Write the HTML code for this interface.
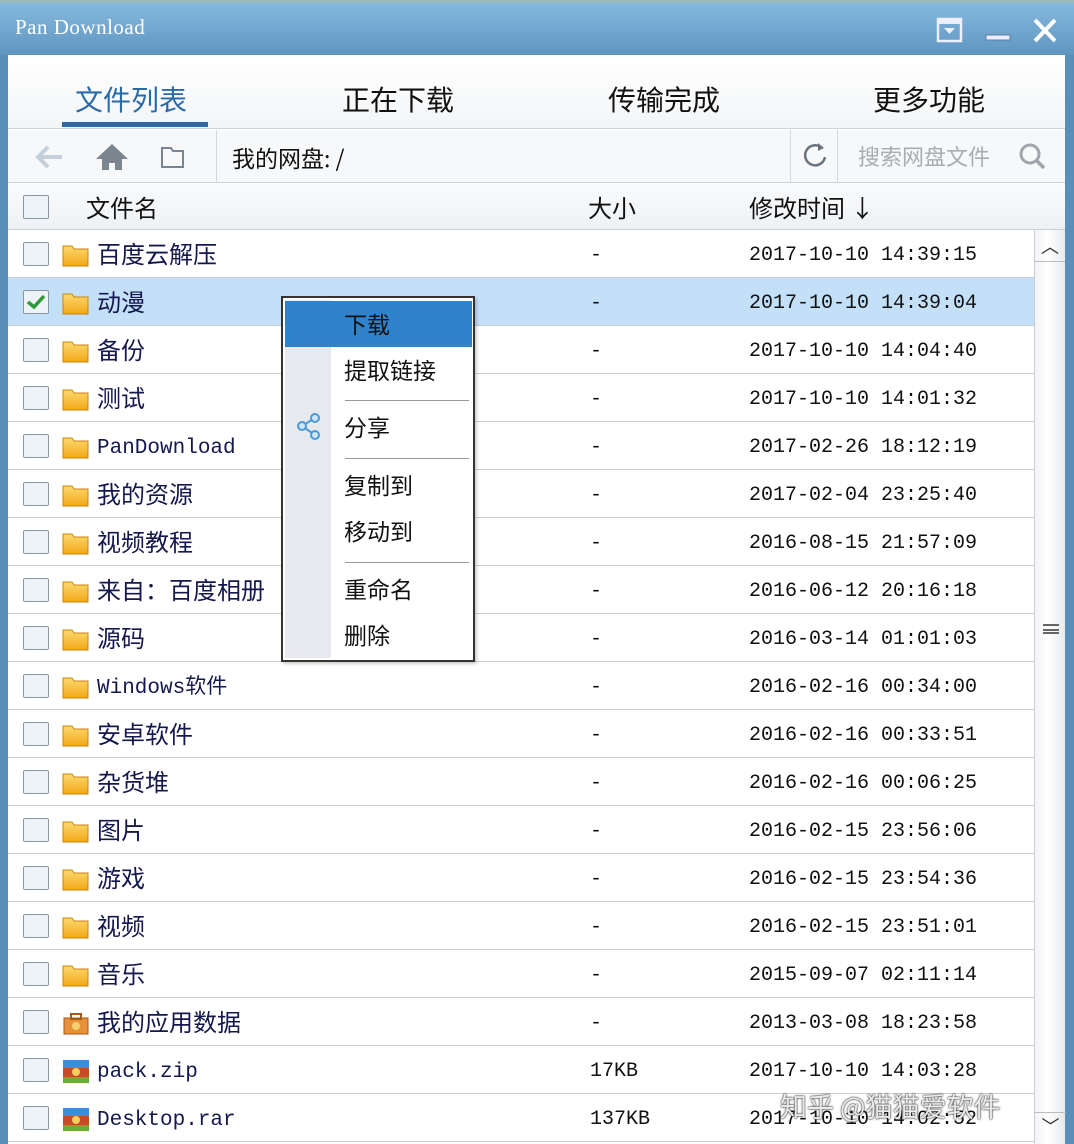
<!DOCTYPE html>
<html><head><meta charset="utf-8">
<style>
*{margin:0;padding:0;box-sizing:border-box}
body{width:1074px;height:1144px;overflow:hidden;background:#5a8fba;font-family:"Liberation Sans","Noto Sans CJK SC",sans-serif;position:relative}
.title{position:absolute;left:0;top:0;width:1074px;height:55px;background:linear-gradient(#86b9df,#5f95c0);border-top:3px solid #9bb;}
.title .t{position:absolute;left:15px;top:12px;font-family:"Liberation Serif",serif;font-size:21px;color:#fff;letter-spacing:0.5px}
.main{position:absolute;left:8px;top:55px;width:1057px;height:1089px;background:#fff}
.tabs{position:absolute;left:0;top:0;width:1057px;height:74px;background:linear-gradient(#fff,#f3f5f7);border-bottom:1px solid #cdd3d8}
.tab{position:absolute;top:24px;font-size:28px;color:#111;font-family:"Noto Sans CJK SC",sans-serif;line-height:40px}
.tool{position:absolute;left:0;top:75px;width:1057px;height:53px;background:#f7f8f9;border-bottom:1px solid #cdd3d8}
.hdr{position:absolute;left:0;top:128px;width:1057px;height:47px;background:linear-gradient(#fafbfc,#eef1f4);border-bottom:1px solid #c8ced4}
.cb{position:absolute;width:26px;height:24px;border:1.5px solid #8a96a0;background:#eef3f8;border-radius:2px}
.row{position:absolute;left:0;width:1026px;height:48px;border-bottom:1px solid #c9ccd0}
.row .cb{left:15px;top:12px}
.fold{position:absolute;left:54px;top:13px;width:27px;height:24px}
.nm{position:absolute;left:89px;top:6px;font-size:24px;color:#14184e;font-family:"Noto Sans CJK SC",sans-serif;line-height:34px}
.nm.m{font-family:"Liberation Mono","Noto Sans CJK SC",monospace;font-size:21px;top:10px}
.sz{position:absolute;left:582px;top:12px;font-family:"Liberation Mono",monospace;font-size:20px;color:#111;line-height:28px}
.dt{position:absolute;left:741px;top:12px;font-family:"Liberation Mono",monospace;font-size:20px;color:#111;line-height:28px}
.menu{position:absolute;left:281px;top:296px;width:194px;height:366px;border:2px solid #333;background:#fff;box-shadow:2px 2px 3px rgba(0,0,0,.2)}
.menu .strip{position:absolute;left:2px;top:2px;width:46px;height:358px;background:#e6e9ed}
.menu .hl{position:absolute;left:2px;top:3px;width:187px;height:46px;background:#2f82cc}
.mi{position:absolute;left:61px;font-size:23px;color:#111;font-family:"Noto Sans CJK SC",sans-serif;line-height:30px}
.sep{position:absolute;left:62px;width:124px;height:1px;background:#999}
</style></head><body>
<div class="title"><span class="t">Pan Download</span>
<svg style="position:absolute;left:935px;top:14px" width="130" height="30" viewBox="0 0 130 30">
<rect x="3" y="2" width="23" height="22" fill="none" stroke="#eef" stroke-width="2.5"/><rect x="3" y="2" width="23" height="5" fill="#eef"/><path d="M9 11h11l-5.5 6z" fill="#eef"/>
<rect x="51" y="18" width="24" height="5" fill="#eef" stroke="#5a7f9f" stroke-width="1"/>
<path d="M100 3l20 21M120 3l-20 21" stroke="#fff" stroke-width="4"/>
</svg></div>
<div class="main">
<div class="tabs">
<div class="tab" style="left:67px;color:#2b6aa8">文件列表</div>
<div style="position:absolute;left:54px;top:67px;width:146px;height:5px;background:#2f6aa6"></div>
<div class="tab" style="left:334px">正在下载</div>
<div class="tab" style="left:600px">传输完成</div>
<div class="tab" style="left:865px">更多功能</div>
</div>
<div class="tool">
<svg style="position:absolute;left:26px;top:12px" width="190" height="30">
<path d="M4 15h24M14 5l-10 10 10 10" stroke="#c4cfda" stroke-width="4" fill="none"/>
<path d="M78 2l-16 15h6v11h7v-7h6v7h7v-11h6z" fill="#7a8590"/>
<path d="M128 6h9l2 3h10v16h-21z" fill="none" stroke="#7a8590" stroke-width="2"/>
</svg>
<div style="position:absolute;left:208px;top:0;width:1px;height:53px;background:#d5d9dd"></div>
<div style="position:absolute;left:224px;top:10px;font-size:23px;color:#111;font-family:'Noto Sans CJK SC',sans-serif">我的网盘: /</div>
<div style="position:absolute;left:782px;top:0;width:1px;height:53px;background:#d5d9dd"></div>
<div style="position:absolute;left:829px;top:0;width:1px;height:53px;background:#d5d9dd"></div>
<svg style="position:absolute;left:792px;top:10px" width="30" height="32"><path d="M22 8a10 10 0 1 0 3 9" stroke="#6a747e" stroke-width="2.5" fill="none"/><path d="M18 3l6 5-6 3z" fill="#6a747e"/></svg>
<div style="position:absolute;left:850px;top:10px;font-size:22px;color:#a8adb2;font-family:'Noto Sans CJK SC',sans-serif">搜索网盘文件</div>
<svg style="position:absolute;left:1010px;top:12px" width="30" height="30"><circle cx="12" cy="12" r="9" stroke="#a0a6ac" stroke-width="3" fill="none"/><path d="M19 19l7 7" stroke="#a0a6ac" stroke-width="3.5"/></svg>
</div>
<div class="hdr">
<div class="cb" style="left:15px;top:12px"></div>
<div style="position:absolute;left:78px;top:6px;font-size:24px;color:#111;font-family:'Noto Sans CJK SC',sans-serif">文件名</div>
<div style="position:absolute;left:580px;top:6px;font-size:24px;color:#111;font-family:'Noto Sans CJK SC',sans-serif">大小</div>
<div style="position:absolute;left:741px;top:6px;font-size:24px;color:#111;font-family:'Noto Sans CJK SC',sans-serif">修改时间 ↓</div>
</div>
<div style="position:absolute;left:1026px;top:175px;width:31px;height:914px;background:linear-gradient(90deg,#f2f3f5,#fff 40%,#e8eaec);border-left:1px solid #c9cdd1">
<div style="height:32px;border-bottom:1px solid #bbb;text-align:center;font-size:18px;color:#333;line-height:34px">︿</div>
<div style="position:absolute;left:8px;top:394px;width:16px;height:10px;border-top:2px solid #666;border-bottom:2px solid #666"></div>
<div style="position:absolute;left:8px;top:399px;width:16px;height:2px;background:#666"></div>
<div style="position:absolute;left:0;bottom:0;width:31px;height:32px;border-top:1px solid #bbb;text-align:center;font-size:18px;color:#333;line-height:28px">﹀</div>
</div>
</div>
<svg width="0" height="0" style="position:absolute"><defs>
<linearGradient id="fg" x1="0" y1="0" x2="0" y2="1"><stop offset="0" stop-color="#ffd870"/><stop offset="1" stop-color="#f0a818"/></linearGradient>
</defs></svg>

<div style="position:absolute;left:8px;top:230px">
<div class="row" style="top:0"><div class="cb"></div><svg class="fold"><path d="M1 3h9l2 3h14v17H1z" fill="url(#fg)" stroke="#c8860a"/></svg><div class="nm">百度云解压</div><div class="sz">-</div><div class="dt">2017-10-10 14:39:15</div></div>
<div class="row" style="top:48px;background:#c4e0f9"><div class="cb"><svg width="24" height="22"><path d="M4 11l6 5 10-11" stroke="#2d9a3a" stroke-width="3.5" fill="none"/></svg></div><svg class="fold"><path d="M1 3h9l2 3h14v17H1z" fill="url(#fg)" stroke="#c8860a"/></svg><div class="nm">动漫</div><div class="sz">-</div><div class="dt">2017-10-10 14:39:04</div></div>
<div class="row" style="top:96px"><div class="cb"></div><svg class="fold"><path d="M1 3h9l2 3h14v17H1z" fill="url(#fg)" stroke="#c8860a"/></svg><div class="nm">备份</div><div class="sz">-</div><div class="dt">2017-10-10 14:04:40</div></div>
<div class="row" style="top:144px"><div class="cb"></div><svg class="fold"><path d="M1 3h9l2 3h14v17H1z" fill="url(#fg)" stroke="#c8860a"/></svg><div class="nm">测试</div><div class="sz">-</div><div class="dt">2017-10-10 14:01:32</div></div>
<div class="row" style="top:192px"><div class="cb"></div><svg class="fold"><path d="M1 3h9l2 3h14v17H1z" fill="url(#fg)" stroke="#c8860a"/></svg><div class="nm m">PanDownload</div><div class="sz">-</div><div class="dt">2017-02-26 18:12:19</div></div>
<div class="row" style="top:240px"><div class="cb"></div><svg class="fold"><path d="M1 3h9l2 3h14v17H1z" fill="url(#fg)" stroke="#c8860a"/></svg><div class="nm">我的资源</div><div class="sz">-</div><div class="dt">2017-02-04 23:25:40</div></div>
<div class="row" style="top:288px"><div class="cb"></div><svg class="fold"><path d="M1 3h9l2 3h14v17H1z" fill="url(#fg)" stroke="#c8860a"/></svg><div class="nm">视频教程</div><div class="sz">-</div><div class="dt">2016-08-15 21:57:09</div></div>
<div class="row" style="top:336px"><div class="cb"></div><svg class="fold"><path d="M1 3h9l2 3h14v17H1z" fill="url(#fg)" stroke="#c8860a"/></svg><div class="nm">来自：百度相册</div><div class="sz">-</div><div class="dt">2016-06-12 20:16:18</div></div>
<div class="row" style="top:384px"><div class="cb"></div><svg class="fold"><path d="M1 3h9l2 3h14v17H1z" fill="url(#fg)" stroke="#c8860a"/></svg><div class="nm">源码</div><div class="sz">-</div><div class="dt">2016-03-14 01:01:03</div></div>
<div class="row" style="top:432px"><div class="cb"></div><svg class="fold"><path d="M1 3h9l2 3h14v17H1z" fill="url(#fg)" stroke="#c8860a"/></svg><div class="nm m">Windows软件</div><div class="sz">-</div><div class="dt">2016-02-16 00:34:00</div></div>
<div class="row" style="top:480px"><div class="cb"></div><svg class="fold"><path d="M1 3h9l2 3h14v17H1z" fill="url(#fg)" stroke="#c8860a"/></svg><div class="nm">安卓软件</div><div class="sz">-</div><div class="dt">2016-02-16 00:33:51</div></div>
<div class="row" style="top:528px"><div class="cb"></div><svg class="fold"><path d="M1 3h9l2 3h14v17H1z" fill="url(#fg)" stroke="#c8860a"/></svg><div class="nm">杂货堆</div><div class="sz">-</div><div class="dt">2016-02-16 00:06:25</div></div>
<div class="row" style="top:576px"><div class="cb"></div><svg class="fold"><path d="M1 3h9l2 3h14v17H1z" fill="url(#fg)" stroke="#c8860a"/></svg><div class="nm">图片</div><div class="sz">-</div><div class="dt">2016-02-15 23:56:06</div></div>
<div class="row" style="top:624px"><div class="cb"></div><svg class="fold"><path d="M1 3h9l2 3h14v17H1z" fill="url(#fg)" stroke="#c8860a"/></svg><div class="nm">游戏</div><div class="sz">-</div><div class="dt">2016-02-15 23:54:36</div></div>
<div class="row" style="top:672px"><div class="cb"></div><svg class="fold"><path d="M1 3h9l2 3h14v17H1z" fill="url(#fg)" stroke="#c8860a"/></svg><div class="nm">视频</div><div class="sz">-</div><div class="dt">2016-02-15 23:51:01</div></div>
<div class="row" style="top:720px"><div class="cb"></div><svg class="fold"><path d="M1 3h9l2 3h14v17H1z" fill="url(#fg)" stroke="#c8860a"/></svg><div class="nm">音乐</div><div class="sz">-</div><div class="dt">2015-09-07 02:11:14</div></div>
<div class="row" style="top:768px"><div class="cb"></div><svg class="fold"><rect x="2" y="7" width="24" height="16" fill="#e89038" stroke="#a55a18"/><rect x="9" y="3" width="10" height="5" fill="none" stroke="#a55a18" stroke-width="2"/><circle cx="14" cy="15" r="4" fill="#f5d070"/></svg><div class="nm">我的应用数据</div><div class="sz">-</div><div class="dt">2013-03-08 18:23:58</div></div>
<div class="row" style="top:816px"><div class="cb"></div><svg class="fold"><rect x="1" y="1" width="26" height="8" fill="#3a8ee0"/><rect x="1" y="9" width="26" height="9" fill="#c84a28"/><rect x="1" y="18" width="26" height="6" fill="#6ab030"/><circle cx="14" cy="13" r="4" fill="#f5d060"/></svg><div class="nm m">pack.zip</div><div class="sz">17KB</div><div class="dt">2017-10-10 14:03:28</div></div>
<div class="row" style="top:864px"><div class="cb"></div><svg class="fold"><rect x="1" y="1" width="26" height="8" fill="#3a8ee0"/><rect x="1" y="9" width="26" height="9" fill="#c84a28"/><rect x="1" y="18" width="26" height="6" fill="#6ab030"/><circle cx="14" cy="13" r="4" fill="#f5d060"/></svg><div class="nm m">Desktop.rar</div><div class="sz">137KB</div><div class="dt">2017-10-10 14:02:52</div></div>
</div>
<div style="position:absolute;left:780px;top:1086px;font-size:27px;color:rgba(255,255,255,.9);text-shadow:0 0 2px #222,0 0 1px #222;font-family:'Noto Sans CJK SC',sans-serif">知乎 @猫猫爱软件</div>

<div class="menu">
<div class="strip"></div>
<div class="hl"></div>
<div class="mi" style="top:10px">下载</div>
<div class="mi" style="top:56px">提取链接</div>
<div class="sep" style="top:102px"></div>
<svg style="position:absolute;left:12px;top:113px" width="28" height="32"><path d="M7 15L20 7M7 15l13 9" stroke="#4a9ad8" stroke-width="2"/><circle cx="7" cy="15" r="4" fill="#cfe6f8" stroke="#4a9ad8" stroke-width="2"/><circle cx="20" cy="7" r="4" fill="#cfe6f8" stroke="#4a9ad8" stroke-width="2"/><circle cx="20" cy="24" r="4" fill="#cfe6f8" stroke="#4a9ad8" stroke-width="2"/></svg>
<div class="mi" style="top:113px">分享</div>
<div class="sep" style="top:160px"></div>
<div class="mi" style="top:171px">复制到</div>
<div class="mi" style="top:217px">移动到</div>
<div class="sep" style="top:264px"></div>
<div class="mi" style="top:275px">重命名</div>
<div class="mi" style="top:321px">删除</div>
</div>
</body></html>
